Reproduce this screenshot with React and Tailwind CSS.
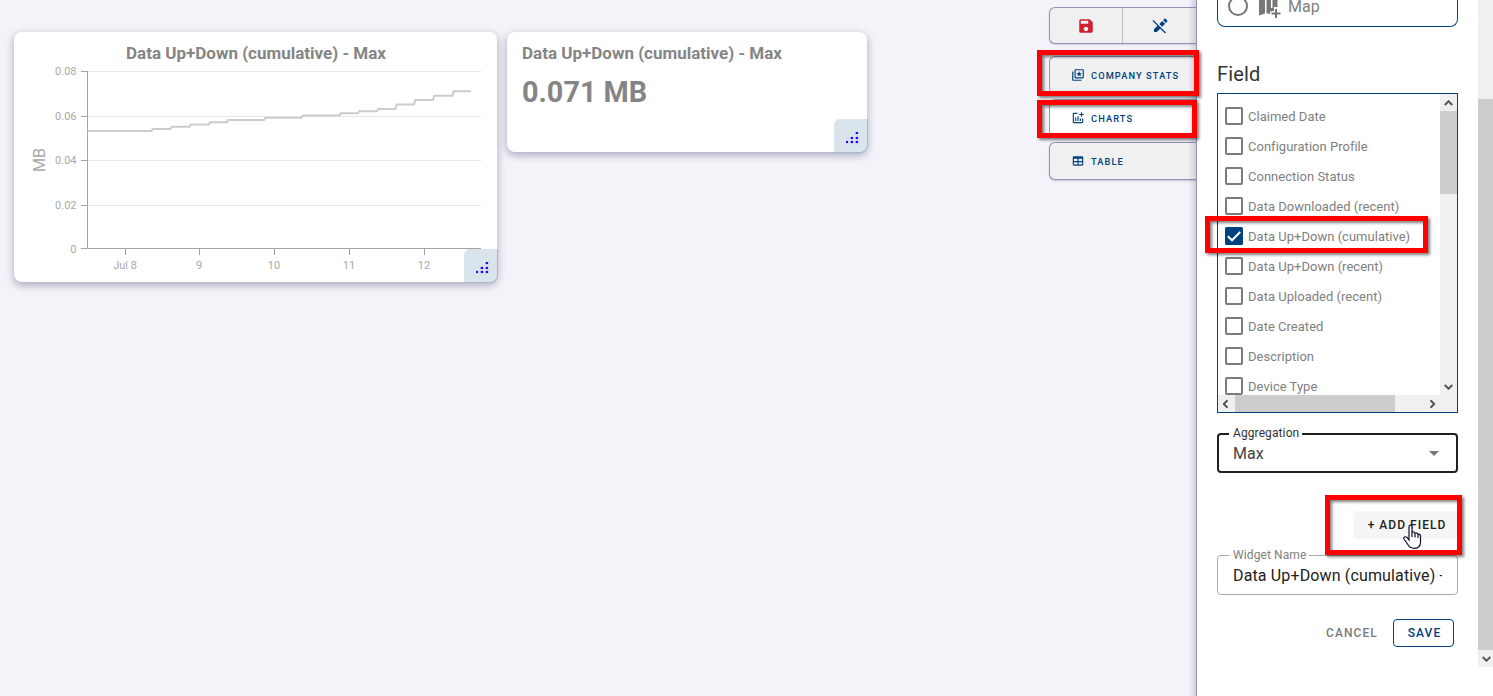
import { MdSave, MdOutlineAddchart } from "react-icons/md";

const FIELDS = [
  "Claimed Date",
  "Configuration Profile",
  "Connection Status",
  "Data Downloaded (recent)",
  "Data Up+Down (cumulative)",
  "Data Up+Down (recent)",
  "Data Uploaded (recent)",
  "Date Created",
  "Description",
  "Device Type",
];

// [label, grid line y, text baseline]
const Y_TICKS = [
  ["0.08", 39.5, 43],
  ["0.06", 84.5, 88],
  ["0.04", 128.5, 132],
  ["0.02", 173.5, 177],
  ["0", 216.5, 221],
];
const X_TICKS = [
  ["Jul 8", 111.5],
  ["9", 185.5],
  ["10", 260.5],
  ["11", 335.5],
  ["12", 410.5],
];

// [x where the step ends, value in MB]
const STEPS = [
  [137.5, 0.053], [156.5, 0.054], [175.5, 0.055], [194.8, 0.056], [213, 0.057],
  [250, 0.058], [287.5, 0.059], [325.5, 0.06], [344, 0.061], [363, 0.062],
  [381.5, 0.063], [400, 0.065], [419, 0.067], [438.5, 0.069], [457, 0.071],
];
const yOf = (v) => 216.6 - v * 2217;
let linePath = `M73.5 ${yOf(0.053)}`;
STEPS.forEach(([x, v], i) => {
  linePath += `H${x}`;
  if (i < STEPS.length - 1) linePath += `L${x + 1.2} ${yOf(STEPS[i + 1][1])}`;
});

const HANDLE_DOTS = [[10, 0], [5, 5], [10, 5], [0, 9], [5, 9], [10, 9]];

function ResizeHandle() {
  return (
    <div className="absolute -right-px -bottom-px h-[34px] w-[34px] rounded-tl-md rounded-br-lg border-r border-b border-[#a9b7c9] bg-[#dae4ed]">
      <svg className="absolute left-3 top-[13px]" width="13" height="12">
        {HANDLE_DOTS.map(([x, y]) => (
          <rect key={`${x}-${y}`} x={x - 0.3} y={y - 0.1} width="2.4" height="2.2" fill="#2a00ff" />
        ))}
      </svg>
    </div>
  );
}

function Chart() {
  return (
    <svg width="483" height="250" className="block" fontFamily="Roboto, sans-serif">
      <text x="242" y="27" textAnchor="middle" fontSize="17" fontWeight="700" fill="#858585" textLength="260">
        Data Up+Down (cumulative) - Max
      </text>
      {Y_TICKS.map(([label, y, baseline]) => (
        <g key={label}>
          {label !== "0" && <path d={`M73 ${y}H467`} stroke="#e8e8e8" />}
          <path d={`M67 ${y}H73`} stroke="#a4a4a4" />
          <text x="62.5" y={baseline} textAnchor="end" fontSize="11" fill="#a9a9a9">{label}</text>
        </g>
      ))}
      <path d="M73.5 39V216.5H467" fill="none" stroke="#a4a4a4" />
      {X_TICKS.map(([label, x]) => (
        <g key={label}>
          <path d={`M${x} 217V223`} stroke="#a4a4a4" />
          <text x={x - 0.5} y="237" textAnchor="middle" fontSize="11" fill="#a9a9a9">{label}</text>
        </g>
      ))}
      <path d={linePath} fill="none" stroke="#cccccc" strokeWidth="2" />
      <text transform="translate(31.3 128) rotate(-90)" textAnchor="middle" fontSize="16" fill="#a9a9a9">MB</text>
    </svg>
  );
}

function Highlight({ className }) {
  return (
    <div className={`pointer-events-none absolute z-20 border-5 border-[#ff0000] [filter:drop-shadow(2px_2px_1.5px_rgba(0,0,0,0.5))] ${className}`} />
  );
}

function Chevron({ className }) {
  return (
    <svg width="9" height="6" viewBox="0 0 9 6" className={className}>
      <path d="M0.7 5L4.5 1.3L8.3 5" fill="none" stroke="#555" strokeWidth="2" />
    </svg>
  );
}

function StatsIcon() {
  return (
    <svg width="14" height="14" viewBox="0 0 24 24" fill="#004280">
      <path fillRule="evenodd" d="M4 6H2v14c0 1.100.9 2 2 2h14v-2H4zM20 2H8C6.900 2 6 2.900 6 4v12c0 1.100.9 2 2 2h12c1.100 0 2-.9 2-2V4c0-1.100-.9-2-2-2zm0 14H8V4h12zM14 5.500l1.300 3.100 3.400.3-2.600 2.200.8 3.300-2.900-1.800-2.900 1.800.8-3.300-2.600-2.200 3.400-.3z" />
    </svg>
  );
}

function TableIcon() {
  return (
    <svg width="14" height="14" viewBox="0 0 24 24" fill="#004280">
      <path d="M5 4h14a2 2 0 0 1 2 2v12a2 2 0 0 1-2 2H5a2 2 0 0 1-2-2V6a2 2 0 0 1 2-2zm0 4v4h6V8zm8 0v4h6V8zm-8 6v4h6v-4zm8 0v4h6v-4z" />
    </svg>
  );
}

function PencilOffIcon() {
  return (
    <svg width="18" height="18" viewBox="0 0 24 24" fill="#004280">
      <path d="M18.660 2C18.400 2 18.160 2.090 17.970 2.280L16.130 4.130L19.880 7.880L21.720 6.030C22.110 5.640 22.110 5 21.720 4.630L19.380 2.280C19.180 2.090 18.910 2 18.660 2M3.280 4L2 5.280L8.500 11.750L4 16.250V20H7.750L12.250 15.500L18.720 22L20 20.720L13.500 14.250L9.750 10.500L3.280 4M15.060 5.190L11.030 9.220L14.780 12.970L18.810 8.940L15.060 5.190Z" />
    </svg>
  );
}

function Cursor() {
  return (
    <svg className="absolute left-[205px] top-[524px] z-30" width="20" height="26" viewBox="0 0 20 26">
      <path d="M7 16V2.700C7 .5 10 .5 10 2.700V8.500C10.500 7.500 13 7.800 13 9.500C13.500 8.700 16 9 16 10.500C16.500 9.900 18.500 10.200 18.500 12V18C18.500 22.500 15.500 24.300 12.500 24.300C8 24.300 6.500 22 5.500 20L2 15C.8 13 3.500 12 5 13.500L7 16ZM10 8.500V13M13 9.500V13.500M16 10.500V14" fill="#fff" stroke="#10102a" strokeWidth="1.200" />
    </svg>
  );
}

export default function App() {
  return (
    <div className="flex h-[696px] w-[1493px] overflow-hidden bg-[#f4f3f9] font-[Roboto,sans-serif]">
      <main className="flex flex-1 items-start gap-2.5 pt-8 pl-3.5">
        <section className="relative h-[250px] w-[483px] rounded-lg bg-white shadow-[0_3px_8px_rgba(50,50,93,0.4)]">
          <Chart />
          <ResizeHandle />
        </section>
        <section className="relative h-[120px] w-[360px] rounded-lg bg-white px-[15px] pt-[11px] font-bold text-[#858585] shadow-[0_3px_8px_rgba(50,50,93,0.4)]">
          <h2 className="text-[17px] leading-5 whitespace-nowrap">Data Up+Down (cumulative) - Max</h2>
          <p className="mt-[11px] text-[28.800px] leading-9">0.071 MB</p>
          <ResizeHandle />
        </section>
      </main>

      <nav className="relative flex w-[147px] flex-col pt-[7px] text-[9.300px] font-medium tracking-[1.080px] text-[#004280]">
        <div className="flex h-[37px] rounded-l-md border border-r-0 border-[#9293b5] bg-[#f0f0f0] shadow-[0_1px_2px_rgba(0,0,0,0.15)]">
          <button className="flex w-[73px] items-center justify-center border-r border-[#bcbcbc]">
            <MdSave size={18} color="#d02030" />
          </button>
          <button className="flex w-[73px] items-center justify-center">
            <PencilOffIcon />
          </button>
        </div>
        <button className="mt-3 flex h-[38px] items-center gap-1.5 rounded-l-md border border-r-0 border-[#9293b5] bg-[#f0f0f0] pl-[21px]">
          <StatsIcon /><span className="pt-0.5">COMPANY STATS</span>
        </button>
        <button className="mt-[5px] flex h-[38px] items-center gap-1.5 rounded-l-md border border-r-0 border-[#9293b5] bg-white pl-[21px]">
          <MdOutlineAddchart size={14} /><span className="pt-0.5">CHARTS</span>
        </button>
        <button className="mt-[5px] flex h-[38px] items-center gap-1.5 rounded-l-md border border-r-0 border-[#9293b5] bg-[#f0f0f0] pl-[21px] shadow-[0_1px_2px_rgba(0,0,0,0.2)]">
          <TableIcon /><span className="pt-0.5">TABLE</span>
        </button>
        <Highlight className="top-[50px] -left-3 h-[46px] w-[162px]" />
        <Highlight className="top-[100px] -left-3 h-[38px] w-[160px]" />
        <div className="pointer-events-none absolute inset-y-0 right-0 w-2 bg-linear-to-r from-transparent to-[#50507838]" />
      </nav>

      <aside className="relative flex w-[297px] border-l border-[#9293b5] bg-white">
        <div className="ml-5 flex w-[242px] flex-col">
          <div className="flex h-[27px] w-[241px] items-start rounded-b-lg border border-t-0 border-[#004280] pl-[10px] text-base text-[#808080]">
            <svg width="21" height="26" className="shrink-0">
              <circle cx="10" cy="6" r="9" fill="none" stroke="#777" strokeWidth="2" />
            </svg>
            <svg width="24" height="26" viewBox="0 0 24 26" className="ml-[9px] shrink-0">
              <path d="M1 0V15.500L7 13.500V0ZM8.500 0V13L14 15V11H16V8H19.500V0H14.500V8H13V0Z" fill="#777" />
              <path d="M18 7V18M12 13.500H23" stroke="#fff" strokeWidth="4" />
              <path d="M18 9V18M13.500 13.500H22.500" stroke="#777" strokeWidth="2" />
            </svg>
            <span className="-mt-[5px] ml-[6px] leading-6">Map</span>
          </div>
          <h2 className="mt-[35px] text-[20px] leading-6 tracking-[0.150px] text-[#333]">Field</h2>
          <div className="mt-[7px] flex h-[320px] w-[241px] flex-col border border-[#004280]">
            <div className="flex h-[301px] overflow-hidden">
              <ul className="w-[222px] pt-[7px]">
                {FIELDS.map((name) => (
                  <li key={name} className="flex h-[30px] items-center gap-[5px] pl-[7px] text-[13px] whitespace-nowrap text-[#808080]">
                    {name === "Data Up+Down (cumulative)" ? (
                      <svg width="18" height="18" className="shrink-0">
                        <rect width="18" height="18" rx="1.500" fill="#004280" />
                        <path d="M2.800 9.300L7 13.300L15.200 5" fill="none" stroke="#fff" strokeWidth="2" />
                      </svg>
                    ) : (
                      <span className="size-[18px] shrink-0 rounded-[2px] border-2 border-[#7b7b7b]" />
                    )}
                    <span className="pt-0.5 tracking-[0.020px]">{name}</span>
                  </li>
                ))}
              </ul>
              <div className="flex w-[17px] flex-col items-center bg-[#f0f0f0]">
                <div className="flex h-[17px] items-center"><Chevron /></div>
                <div className="h-[83px] w-full bg-[#cdcdcd]" />
                <Chevron className="mt-auto mb-[5px] rotate-180" />
              </div>
            </div>
            <div className="flex h-[17px] items-center bg-[#f0f0f0]">
              <Chevron className="ml-[3px] -rotate-90" />
              <div className="ml-[5px] h-full w-40 bg-[#cdcdcd]" />
              <Chevron className="ml-[33px] rotate-90" />
            </div>
          </div>
          <div className="relative mt-5 flex h-10 w-[241px] items-center justify-between rounded border-2 border-[#202020] pr-[17px] pl-[14px] text-base text-[#444]">
            <span className="absolute -top-[10px] left-2.5 bg-white pr-[3px] pl-1 text-xs leading-4 tracking-[0.100px] text-[#333]">Aggregation</span>
            <span className="pt-0.5">Max</span>
            <span className="h-0 w-0 border-x-5 border-t-5 border-x-transparent border-t-[#777]" />
          </div>
          <button className="mt-[38px] ml-[137px] h-7 w-[104px] rounded bg-[#f5f5f5] pl-0.5 text-xs font-medium tracking-[1.030px] text-[#222]">+ ADD FIELD</button>
          <div className="relative mt-4 flex h-10 w-[241px] items-center rounded border border-[#aaa] pr-[14px] pl-[15px] text-base text-[#222]">
            <span className="absolute -top-[9px] left-[11px] bg-white pr-[3px] pl-1 text-xs leading-4 tracking-[0.100px] text-[#808080]">Widget Name</span>
            <span className="w-[209px] overflow-hidden pt-0.5 tracking-[0.140px] whitespace-nowrap">Data Up+Down (cumulative) - Max</span>
          </div>
          <div className="mt-6 flex items-center text-xs font-medium tracking-[1.070px]">
            <button className="ml-[109px] w-[52px] text-[#7a7a7a]">CANCEL</button>
            <button className="ml-[15px] h-7 w-[61px] rounded border border-[#004280] pl-0.5 text-[#004280]">SAVE</button>
          </div>
        </div>
        <div className="ml-auto flex h-[667px] w-[15px] flex-col bg-[#f0f0f0] pt-[99px]">
          <div className="h-[551px] bg-[#cdcdcd]" />
          <Chevron className="mt-[6px] ml-1 rotate-180" />
        </div>
        <Highlight className="top-[216px] left-[8px] h-[37px] w-[223px]" />
        <Highlight className="top-[495px] left-[128px] h-[60px] w-[137px]" />
        <Cursor />
      </aside>
    </div>
  );
}
